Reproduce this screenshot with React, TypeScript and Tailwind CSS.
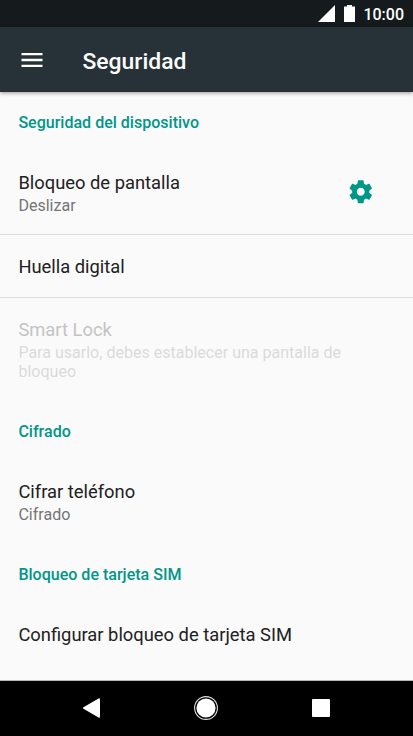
import React from "react";

interface PreferenceProps {
  title: string;
  summary?: string;
  className: string;
  disabled?: boolean;
  action?: React.ReactNode;
}

const GearIcon: React.FC = () => (
  <svg
    viewBox="0 0 24 24"
    className="w-[27.5px] h-[27.5px] mb-[2px] fill-[#009688]"
  >
    <path d="M19.43 12.98c.04-.32.07-.64.07-.98s-.03-.66-.07-.98l2.11-1.65c.19-.15.24-.42.12-.64l-2-3.46c-.12-.22-.39-.3-.61-.22l-2.49 1c-.52-.4-1.08-.73-1.69-.98l-.38-2.65C14.46 2.18 14.25 2 14 2h-4c-.25 0-.46.18-.49.42l-.38 2.65c-.61.25-1.17.59-1.69.98l-2.49-1c-.23-.09-.49 0-.61.22l-2 3.46c-.13.22-.07.49.12.64l2.11 1.65c-.04.32-.07.65-.07.98s.03.66.07.98l-2.11 1.65c-.19.15-.24.42-.12.64l2 3.46c.12.22.39.3.61.22l2.49-1c.52.4 1.08.73 1.69.98l.38 2.65c.03.24.24.42.49.42h4c.25 0 .46-.18.49-.42l.38-2.65c.61-.25 1.17-.59 1.69-.98l2.49 1c.23.09.49 0 .61-.22l2-3.46c.12-.22.07-.49-.12-.64l-2.11-1.65zM12 15.5c-1.93 0-3.5-1.57-3.5-3.5s1.57-3.5 3.5-3.5 3.5 1.57 3.5 3.5-1.57 3.5-3.5 3.5z" />
  </svg>
);

const StatusBar: React.FC = () => (
  <div className="h-[27px] bg-[#151a1c] flex items-center justify-end pr-[9px] text-white">
    <svg viewBox="0 0 17 17" className="w-[17px] h-[17px] mr-[9px] fill-white">
      <path d="M0 17 17 0v17z" />
    </svg>
    <svg viewBox="0 0 11 17" className="w-[11px] h-[17px] mr-[8px] fill-white">
      <path d="M3 0h5v1.500h3V17H0V1.500h3z" />
    </svg>
    <span className="text-[16px] leading-[20px] font-medium pt-[2px]">
      10:00
    </span>
  </div>
);

const AppBar: React.FC = () => (
  <header className="h-[65px] bg-[#263238] flex items-center pl-[18px] shadow-[0_1px_4px_rgba(0,0,0,0.4)] relative">
    <svg viewBox="0 0 24 24" className="w-[28px] h-[28px] fill-white">
      <path d="M3 18h18v-2H3v2zm0-5h18v-2H3v2zm0-7v2h18V6H3z" />
    </svg>
    <h1 className="ml-[36.5px] text-[22.9px] leading-[28px] font-medium text-white pt-[4px]">
      Seguridad
    </h1>
  </header>
);

const Category: React.FC<{ title: string }> = ({ title }) => (
  <h2 className="h-[56px] pt-[2px] px-[18.4px] flex items-center text-[16.05px] font-medium text-[#009688]">
    {title}
  </h2>
);

const Preference: React.FC<PreferenceProps> = ({
  title,
  summary,
  className,
  disabled = false,
  action,
}) => (
  <div
    className={`flex items-center justify-between pl-[18.4px] pr-[39px] ${className}`}
  >
    <div>
      <div
        className={`text-[18.35px] leading-[24px] ${
          disabled ? "text-[#c4c4c4]" : "text-[#212121]"
        } ${summary ? "" : "pt-[2px]"}`}
      >
        {title}
      </div>
      {summary && (
        <div
          className={`text-[16.05px] leading-[19px] mt-[1px] ${
            disabled ? "text-[#dadada]" : "text-[#757575]"
          }`}
        >
          {summary}
        </div>
      )}
    </div>
    {action}
  </div>
);

const NavigationBar: React.FC = () => (
  <nav className="h-[55px] bg-black flex items-center justify-between pl-[83px] pr-[83px] pb-[1px]">
    <svg viewBox="0 0 17 20" className="w-[17px] h-[20px] fill-white">
      <path d="M.5 9.200 15.500.6q1.500-.7 1.500.7v17.400q0 1.400-1.500.700L.5 10.800q-1-.8 0-1.600z" />
    </svg>
    <svg viewBox="0 0 24 24" className="w-[24px] h-[24px]">
      <circle cx="12" cy="12" r="11.400" fill="none" stroke="#e0e0e0" strokeWidth="1.1" />
      <circle cx="12" cy="12" r="9.600" fill="#fff" />
    </svg>
    <div className="w-[18px] h-[18px] rounded-[1px] bg-white" />
  </nav>
);

const App: React.FC = () => {
  return (
    <div className="w-[413px] h-[736px] flex flex-col overflow-hidden bg-[#fafafa] font-[Roboto,sans-serif]">
      <StatusBar />
      <AppBar />
      <main className="flex-1 pt-[2px] border-b border-[#b5bab9]">
        <Category title="Seguridad del dispositivo" />
        <Preference
          title="Bloqueo de pantalla"
          summary="Deslizar"
          action={<GearIcon />}
          className="h-[85px] pt-[2px] border-b border-[#dadada]"
        />
        <Preference
          title="Huella digital"
          className="h-[63px] border-b border-[#dadada]"
        />
        <Preference
          title="Smart Lock"
          summary="Para usarlo, debes establecer una pantalla de bloqueo"
          className="h-[105px] pb-[2px]"
          disabled
        />
        <Category title="Cifrado" />
        <Preference
          title="Cifrar teléfono"
          summary="Cifrado"
          className="h-[87px] pb-[1px]"
        />
        <Category title="Bloqueo de tarjeta SIM" />
        <Preference
          title="Configurar bloqueo de tarjeta SIM"
          className="h-[64px]"
        />
      </main>
      <NavigationBar />
    </div>
  );
};

export default App;
